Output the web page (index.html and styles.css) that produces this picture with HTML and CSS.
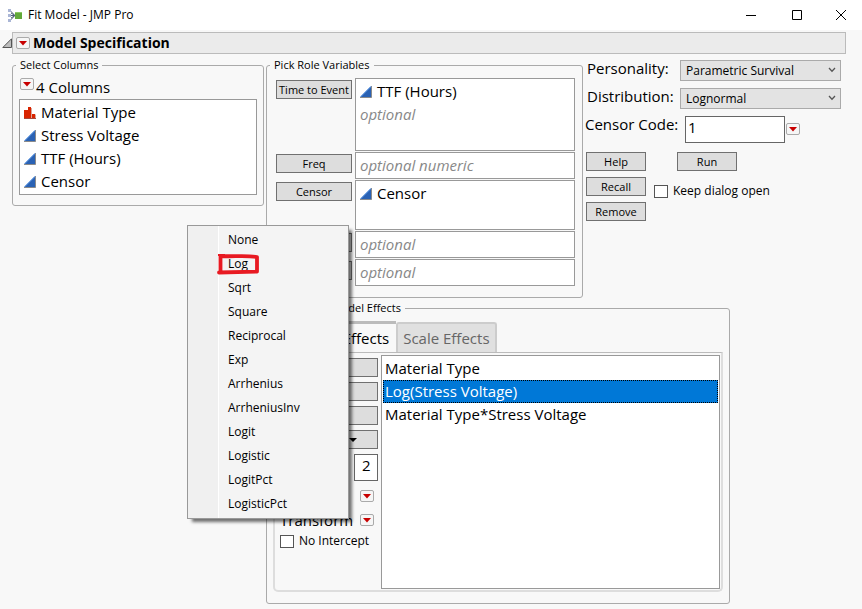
FILE: index.html
```html
<!DOCTYPE html>
<html lang="en">
<head>
<meta charset="utf-8">
<title>Fit Model - JMP Pro</title>
<link rel="stylesheet" href="styles.css">
</head>
<body>
<svg class="defs" aria-hidden="true">
  <symbol id="continuous" viewBox="0 0 12 12"><path d="M0 11.500 11.500 0V11.500Z" fill="#2a62b4"/><path d="M0 11.500H11.500V0" fill="none" stroke="#8b8b8b"/><path d="M0.500 10.800 11 0.300" stroke="#4f8ee0" fill="none"/></symbol>
  <symbol id="nominal" viewBox="0 0 12 12"><path d="M0 3H4V11H0ZM4 0H7V11H4ZM8 7H11V11H8Z" fill="#d92400"/><path d="M0 11.500H12" stroke="#a8483a" fill="none"/><path d="M7 1H8V11H7ZM11 7.500H12V11H11Z" fill="#d9a59c"/></symbol>
  <symbol id="hotspot" viewBox="0 0 14 12"><path d="M3 4H11L7 8.500Z" fill="#c80000"/></symbol>
  <symbol id="chevron" viewBox="0 0 8 6"><path d="M1 1 4 4.200 7 1" fill="none" stroke="#555" stroke-width="1.300"/></symbol>
</svg>

<header class="titlebar">
  <svg class="app-icon" viewBox="0 0 15 13" aria-hidden="true"><path d="M2 1.500 6 5.500M2 6.500H7M2 11.500 6 7.500M3 4 7 6.500 3 9" fill="none" stroke="#50607a"/><path d="M0 0H3V3H0ZM0 5H3V8H0ZM0 10H3V13H0Z" fill="#aab6d6"/><path d="M7 3H14V10H7Z" fill="#62a83a"/><path d="M7 3H14V4H7Z" fill="#8cc866"/></svg>
  <h1 class="title">Fit Model - JMP Pro</h1>
  <button class="win-btn" aria-label="Minimize"><svg viewBox="0 0 12 12"><path d="M1 6.500H11"/></svg></button>
  <button class="win-btn" aria-label="Maximize"><svg viewBox="0 0 12 12"><path d="M1.500 1.500H10.500V10.500H1.500Z"/></svg></button>
  <button class="win-btn" aria-label="Close"><svg viewBox="0 0 12 12"><path d="M1 1 11 11M11 1 1 11"/></svg></button>
</header>

<main>
  <div class="outline">
    <svg class="disclosure" viewBox="0 0 10 10" aria-hidden="true"><path d="M0.800 9.500H9.500V0.800Z" fill="#bdbdbd" stroke="#555"/></svg>
    <div class="outline-bar">
      <button class="hotspot" aria-label="Model options"><svg><use href="#hotspot"/></svg></button>
      <h2>Model Specification</h2>
    </div>
  </div>

  <div class="workspace">
    <fieldset class="columns">
      <legend>Select Columns</legend>
      <div class="count"><button class="hotspot" aria-label="Column options"><svg><use href="#hotspot"/></svg></button><span>4 Columns</span></div>
      <ul class="list">
        <li><svg class="type"><use href="#nominal"/></svg>Material Type</li>
        <li><svg class="type"><use href="#continuous"/></svg>Stress Voltage</li>
        <li><svg class="type"><use href="#continuous"/></svg>TTF (Hours)</li>
        <li><svg class="type"><use href="#continuous"/></svg>Censor</li>
      </ul>
    </fieldset>

    <fieldset class="roles">
      <legend>Pick Role Variables</legend>
      <div class="role-grid">
        <button class="btn">Time to Event</button>
        <ul class="list tall"><li><svg class="type"><use href="#continuous"/></svg>TTF (Hours)</li><li class="hint">optional</li></ul>
        <button class="btn">Freq</button>
        <ul class="list single"><li class="hint">optional numeric</li></ul>
        <button class="btn">Censor</button>
        <ul class="list medium"><li><svg class="type"><use href="#continuous"/></svg>Censor</li></ul>
        <button class="btn" aria-label="Label"></button>
        <ul class="list single"><li class="hint">optional</li></ul>
        <button class="btn" aria-label="By"></button>
        <ul class="list single"><li class="hint">optional</li></ul>
      </div>
    </fieldset>

    <section class="controls">
      <div class="field">
        <label for="personality">Personality:</label>
        <div class="select"><select id="personality"><option>Parametric Survival</option></select><svg><use href="#chevron"/></svg></div>
      </div>
      <div class="field">
        <label for="distribution">Distribution:</label>
        <div class="select"><select id="distribution"><option>Lognormal</option></select><svg><use href="#chevron"/></svg></div>
      </div>
      <div class="field code">
        <label for="code">Censor Code:</label>
        <input class="text" id="code" value="1">
        <button class="hotspot" aria-label="Censor code options"><svg><use href="#hotspot"/></svg></button>
      </div>
      <div class="actions">
        <div class="stack">
          <button class="btn">Help</button>
          <button class="btn">Recall</button>
          <button class="btn">Remove</button>
        </div>
        <div class="run">
          <button class="btn">Run</button>
          <label class="check"><input type="checkbox">Keep dialog open</label>
        </div>
      </div>
    </section>

    <fieldset class="effects">
      <legend>Construct Model Effects</legend>
      <div class="tabs" role="tablist">
        <button class="tab active" role="tab" aria-selected="true">Location Effects</button>
        <button class="tab" role="tab" aria-selected="false">Scale Effects</button>
      </div>
      <div class="panel">
        <div class="tools">
          <button class="btn" aria-label="Add"></button>
          <button class="btn" aria-label="Cross"></button>
          <button class="btn" aria-label="Nest"></button>
          <button class="btn macros" aria-label="Macros"><svg viewBox="0 0 8 4"><path d="M0 0H8L4 4Z"/></svg></button>
          <input class="text degree" aria-label="Degree" value="2">
          <div class="option"><button class="hotspot" aria-label="Attributes"><svg><use href="#hotspot"/></svg></button></div>
          <div class="option"><span>Transform</span><button class="hotspot" aria-label="Transform"><svg><use href="#hotspot"/></svg></button></div>
          <label class="check"><input type="checkbox">No Intercept</label>
        </div>
        <ul class="list effect-list">
          <li>Material Type</li>
          <li class="selected">Log(Stress Voltage)</li>
          <li>Material Type*Stress Voltage</li>
        </ul>
      </div>
    </fieldset>
  </div>
</main>

<div class="menu" role="menu">
  <button role="menuitem">None</button>
  <button role="menuitem">Log<svg class="mark" viewBox="0 0 44 22" aria-hidden="true"><path d="M3.500 19V3C14 4 28 2 40 4V18.500L2 19.500" fill="none" stroke="#e81a22" stroke-width="3.800" stroke-linejoin="round" stroke-linecap="round"/><path d="M1 2H8" stroke="#e81a22" stroke-width="2"/></svg></button>
  <button role="menuitem">Sqrt</button>
  <button role="menuitem">Square</button>
  <button role="menuitem">Reciprocal</button>
  <button role="menuitem">Exp</button>
  <button role="menuitem">Arrhenius</button>
  <button role="menuitem">ArrheniusInv</button>
  <button role="menuitem">Logit</button>
  <button role="menuitem">Logistic</button>
  <button role="menuitem">LogitPct</button>
  <button role="menuitem">LogisticPct</button>
</div>
</body>
</html>
```
FILE: styles.css
```css
* { box-sizing: border-box; }
body { margin: 0; min-height: 100vh; background: #f8f8f8; color: #000; font: 12px/16px "Open Sans", "Noto Sans", sans-serif; }
button, input, select { margin: 0; font: inherit; color: inherit; }
svg { display: block; flex: none; }
ul { margin: 0; padding: 0; list-style: none; }
.defs { position: absolute; width: 0; height: 0; }

.titlebar { display: flex; align-items: center; height: 30px; padding-left: 8px; background: #fff; }
.app-icon { width: 15px; height: 13px; margin-right: 5px; }
.title { flex: 1; margin: 0; font-size: 12px; font-weight: 400; }
.win-btn { display: flex; align-items: center; justify-content: center; width: 46px; height: 30px; padding: 0; border: 0; background: none; }
.win-btn:last-child { width: 42px; }
.win-btn svg { width: 12px; height: 12px; fill: none; stroke: #000; }

.outline { display: flex; align-items: center; padding: 2px 16px 0 2px; }
.disclosure { width: 10px; height: 10px; }
.outline-bar { display: flex; flex: 1; align-items: center; gap: 3px; height: 22px; padding-left: 3px; border: 1px solid #bbb; background: #ebebeb; }
.outline-bar h2 { margin: 0; font-size: 14px; line-height: 20px; font-weight: 700; }

.hotspot { flex: none; width: 14px; height: 12px; padding: 0; border: 1px solid #aaa; border-radius: 2px; background: #f6f6f6; overflow: hidden; }
.hotspot svg { width: 14px; height: 12px; margin: -1px; }

.workspace { display: grid; grid-template-columns: 252fr 317fr 261fr; column-gap: 2px; align-items: start; padding: 3px 16px 0 12px; }
fieldset { min-width: 0; margin: 0; padding: 0; border: 1px solid #aaa; border-radius: 3px; }
legend { margin-left: -3px; padding: 0 4px; font-size: 11px; line-height: 16px; }

.list { border: 1px solid #999; background: #fff; font-size: 15px; line-height: 23px; }
.list li { display: flex; align-items: center; height: 23px; padding-left: 4px; white-space: nowrap; }
.type { width: 12px; height: 12px; margin-right: 5px; }
.hint { color: #888; font-style: italic; }

.columns { padding: 5px 6px 10px; }
.columns .list { padding: 1px 0; }
.count { display: flex; align-items: flex-start; gap: 2px; height: 21px; font-size: 15px; line-height: 18px; }
.columns .hotspot { margin-left: 1px; }

.roles { grid-row: 1; grid-column: 2; padding: 5px 7px 11px 9px; }
.roles legend { margin-left: -6px; }
.role-grid { display: grid; grid-template-columns: 76px 1fr; gap: 1px 3px; align-items: start; }
.role-grid .btn { margin-top: 2px; }
.tall { height: 73px; }
.medium { height: 50px; }
.single { height: 27px; }
.role-grid .list { padding-top: 1px; }

.btn { height: 19px; padding: 0; border: 1px solid #707070; background: #ddd; font-size: 11px; line-height: 16px; white-space: nowrap; }

.controls { display: flex; flex-direction: column; gap: 7px; padding: 3px 5px 0 0; }
.field { display: flex; align-items: flex-start; }
.field label { width: 95px; padding-left: 2px; font-size: 15px; line-height: 16px; white-space: nowrap; }
.select { position: relative; flex: 1; }
.select select { display: block; width: 100%; height: 21px; padding: 0 20px 0 5px; border: 1px solid #aaa; border-radius: 0; background: #e3e3e3; appearance: none; }
.select svg { position: absolute; top: 7px; right: 5px; width: 8px; height: 6px; pointer-events: none; }
.text { width: 100px; height: 27px; padding: 0 2px 6px; border: 1px solid #666; background: #fff; font-size: 15px; line-height: 18px; }
.code label { width: 100px; padding-left: 0; }
.code .hotspot { margin: 7px 0 0 1px; }

.actions { display: flex; gap: 8px; padding: 2px 0 0 1px; }
.stack { display: flex; flex-direction: column; gap: 6px; width: 60px; }
.run .btn { display: block; width: 60px; margin: 0 0 13px 23px; }
.check { display: flex; align-items: center; gap: 5px; line-height: 14px; white-space: nowrap; }
.check input { width: 14px; height: 13px; border: 1px solid #555; background: #fff; appearance: none; }

.effects { grid-column: 2 / 4; width: 80%; margin-top: 2px; padding: 5px 6px 11px; }
.effects legend { margin-left: 2px; }
.tabs { display: flex; align-items: flex-end; height: 31px; }
.tab { height: 30px; padding: 0 5px; border: 2px solid #ccc; border-bottom: 0; border-radius: 3px 3px 0 0; background: #e0e0e0; color: #666; font-size: 15px; white-space: nowrap; }
.tab.active { height: 31px; border-top: 3px solid #bbb; border-left-color: #ddd; border-right: 0; border-radius: 0; background: #f8f8f8; color: #000; padding: 0 7px 0 4px; }
.panel { display: flex; gap: 3px; padding: 2px 1px 1px 5px; border: 2px solid #ddd; border-top: 1px solid #bbb; border-radius: 0 0 5px 5px; }
.tools { display: flex; flex: none; flex-direction: column; gap: 5px; width: 98px; padding-top: 3px; }
.macros svg { width: 8px; height: 4px; margin-left: 68px; }
.degree { align-self: flex-end; width: 24px; padding-left: 7px; }
.option { display: flex; align-items: center; justify-content: flex-end; height: 19px; padding-right: 4px; font-size: 15px; }
.option span { margin-right: auto; }
.effect-list { flex: 1; height: 234px; padding: 1px; }
.effect-list li { padding-left: 2px; }
.effect-list .selected { border: 1px dotted #000; padding-left: 1px; background: #0078d7; color: #fff; }

.menu { position: absolute; top: 225px; left: 187px; display: flex; flex-direction: column; width: 162px; padding: 2px; border: 1px solid #999; background: linear-gradient(90deg, #f0f0f0 30px, #fff 30px, #fff 31px, #f4f4f4 31px); box-shadow: 4px 4px 3px -1px rgba(0, 0, 0, .55); }
.menu button { position: relative; height: 24px; padding: 0 0 0 38px; border: 0; background: none; text-align: left; }
.mark { position: absolute; top: 1px; left: 27px; width: 44px; height: 22px; }
```
